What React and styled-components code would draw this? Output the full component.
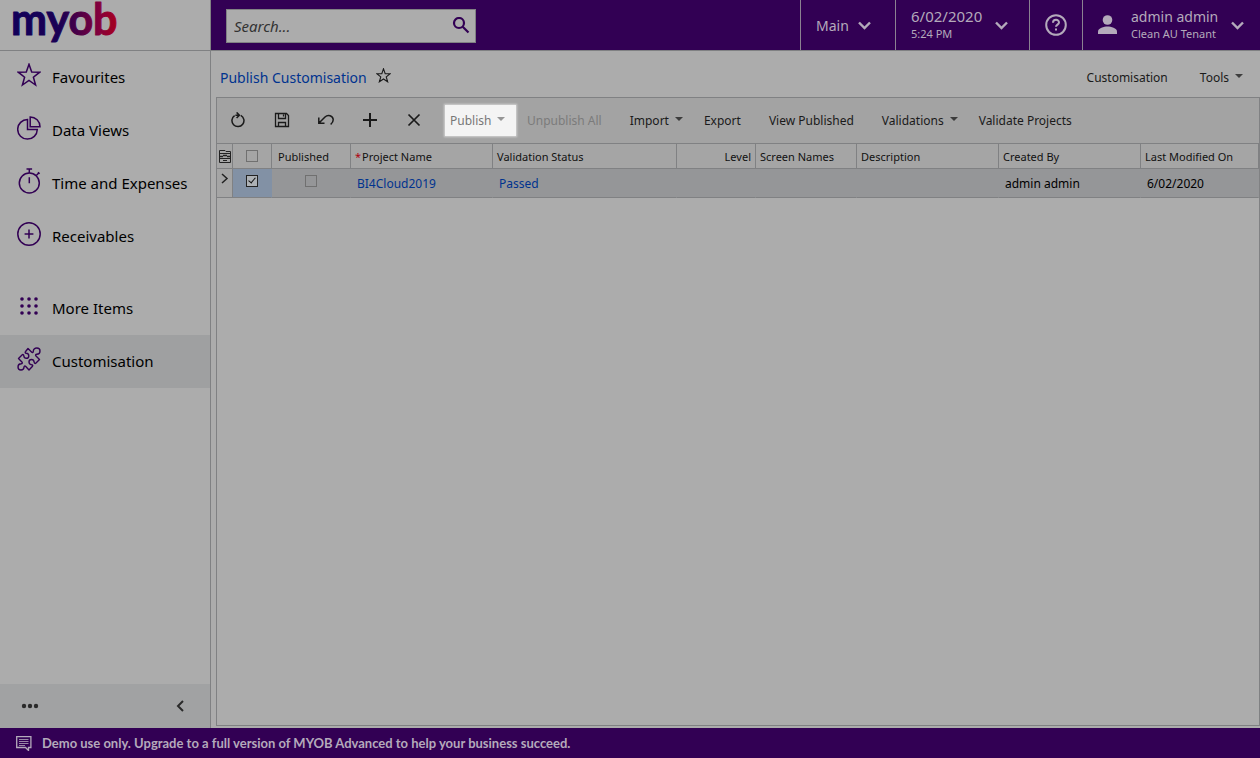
import React from "react";
import styled, { createGlobalStyle } from "styled-components";

const purple = "#320054";
const line = "#808183";
const ui = '"Noto Sans", "Open Sans", sans-serif';
const brand = 'Lato, "Noto Sans", sans-serif';

const GlobalStyle = createGlobalStyle`
  *, *::before, *::after { box-sizing: border-box; }
  body { margin: 0; background: #acacac; font-family: ${ui}; font-size: 12px; color: #1a1a1a; }
  button, input { font: inherit; color: inherit; }
  button { border: 0; padding: 0; background: none; cursor: pointer; white-space: nowrap; }
  a { text-decoration: none; }
  svg { display: block; flex: none; }
`;

const Page = styled.div`
  min-height: 100vh;
  display: flex;
  flex-direction: column;
`;

const Header = styled.header`
  display: flex;
  height: 51px;
  border-bottom: 1px solid ${line};
`;

const LogoLink = styled.a`
  flex: none;
  width: 211px;
  padding-left: 10px;
  border-right: 1px solid ${line};
`;

const HeaderBar = styled.div`
  flex: 1;
  display: flex;
  background: ${purple};
  color: #b4aabb;
`;

const SearchBox = styled.form`
  display: flex;
  align-items: center;
  width: 250px;
  height: 34px;
  margin: 9px auto 0 15px;
  padding: 0 5px 0 7px;
  background: #acacac;
  border: 1px solid ${line};
  color: ${purple};
`;

const SearchInput = styled.input`
  flex: 1;
  min-width: 0;
  border: 0;
  padding: 0;
  background: none;
  outline: 0;
  font-size: 15px;
  font-style: italic;
  color: #222;
  &::placeholder { color: #333; opacity: 1; }
`;

const HeaderButton = styled.button`
  display: flex;
  align-items: center;
  gap: ${(p) => p.$gap || 0}px;
  justify-content: ${(p) => (p.$center ? "center" : "flex-start")};
  width: ${(p) => p.$width}px;
  padding: ${(p) => (p.$center ? "0" : "0 0 0 15px")};
  border-left: 1px solid #8b8291;
  font-size: 14px;
  text-align: left;
`;

const TwoLines = styled.span`
  display: flex;
  flex-direction: column;
  font-size: ${(p) => p.$size}px;
  line-height: 17px;
  small { font-size: 11px; }
`;

const Body = styled.div`
  flex: 1;
  display: flex;
`;

const Sidebar = styled.nav`
  flex: none;
  width: 211px;
  display: flex;
  flex-direction: column;
  border-right: 1px solid ${line};
`;

const NavItem = styled.a`
  display: flex;
  align-items: center;
  gap: 11px;
  height: 53px;
  margin-top: ${(p) => (p.$apart ? 19 : 0)}px;
  padding: 0 0 1px 17px;
  background: ${(p) => (p.$active ? "#9fa0a1" : "transparent")};
  color: #000;
  font-size: 15px;
  svg { color: ${purple}; margin-bottom: 4px; }
`;

const SidebarFooter = styled.div`
  display: flex;
  align-items: center;
  justify-content: space-between;
  height: 44px;
  margin-top: auto;
  padding: 0 25px 0 21px;
  background: #a1a2a3;
`;

const Main = styled.main`
  flex: 1;
  min-width: 0;
  display: flex;
  flex-direction: column;
  padding: 0 0 2px 5px;
`;

const TitleRow = styled.div`
  display: flex;
  align-items: center;
  height: 46px;
  padding: 6px 17px 0 4px;
  gap: 32px;
`;

const Title = styled.h1`
  margin: 0;
  font-size: 14px;
  font-weight: 400;
  color: #00338f;
`;

const StarButton = styled.button`
  margin: 0 auto 4px -23px;
`;

const TextButton = styled.button`
  display: flex;
  align-items: center;
  gap: 6px;
`;

const Panel = styled.section`
  flex: 1;
  border: 1px solid ${line};
`;

const Toolbar = styled.div`
  display: flex;
  align-items: center;
  height: 45px;
  background: #a3a3a3;
`;

const IconButton = styled.button`
  display: flex;
  align-items: center;
  justify-content: center;
  width: 44px;
  height: 45px;
  padding: 0 2px 2px 0;
`;

const ToolButton = styled.button`
  display: flex;
  align-items: center;
  gap: 6px;
  height: 31px;
  padding: 0 ${(p) => (p.$menu ? 7 : 14)}px 0 14px;
  color: ${(p) => (p.disabled ? "#7b7b7b" : "#1a1a1a")};
`;

const PublishButton = styled(ToolButton)`
  width: 71px;
  margin-left: 8px;
  margin-right: -3px;
  padding: 0 5px;
  background: #f4f4f4;
  box-shadow: 0 0 2px 1px #d4d4d4;
  color: #777;
`;

const Table = styled.table`
  width: 100%;
  table-layout: fixed;
  border-collapse: separate;
  border-spacing: 0;
  border-top: 1px solid ${line};
`;

const HeadCell = styled.th`
  height: 25px;
  padding: 0 4px;
  border-right: 1px solid ${line};
  border-bottom: 1px solid ${line};
  background: #a5a5a5;
  font-size: 11px;
  font-weight: 400;
  text-align: ${(p) => p.$align || "left"};
  white-space: nowrap;
  color: #111;
  sup { color: #b00010; line-height: 0; vertical-align: baseline; margin-right: 1px; font-size: 11px; }
`;

const PaddedHeadCell = styled(HeadCell)`
  padding-left: 6px;
`;

const CheckHeadCell = styled(HeadCell)`
  padding: 0 4px 0 3px;
`;

const Cell = styled.td`
  height: 29px;
  padding: 0 6px;
  border-bottom: 1px solid ${line};
  border-right: 1px solid ${(p) => (p.$gutter ? line : "transparent")};
  background: ${(p) => (p.$gutter ? "#a5a5a5" : p.$selected ? "#8291a5" : "#959698")};
  color: #000;
  white-space: nowrap;
  a { color: #00338f; }
`;

const Check = styled.input`
  appearance: none;
  display: block;
  width: 12px;
  height: 12px;
  margin: 0 auto;
  border: 1px solid ${(p) => (p.defaultChecked ? "#222" : "#707070")};
  background: ${(p) => (p.defaultChecked ? "#adb1b5" : "transparent")};
  &:checked::after {
    content: "";
    display: block;
    width: 4px;
    height: 7px;
    margin: 0 0 0 3px;
    border: solid #111;
    border-width: 0 1px 1px 0;
    transform: rotate(40deg);
  }
`;

const Lift = styled.div`
  padding-bottom: ${(p) => p.$by}px;
`;

const Notice = styled.footer`
  display: flex;
  align-items: center;
  gap: 10px;
  height: 30px;
  padding-left: 16px;
  background: ${purple};
  color: #b4aabb;
  font-family: ${brand};
  font-size: 13px;
  font-weight: 700;
`;

const Icon = ({ size = 24, w = 1.5, children, ...rest }) => (
  <svg width={size} height={size} viewBox="0 0 24 24" fill="none" stroke="currentColor" strokeWidth={w} aria-hidden="true" {...rest}>
    {children}
  </svg>
);

const Logo = () => (
  <svg width="116" height="50" viewBox="0 0 116 50" overflow="visible" role="img" aria-label="myob">
    <defs>
      <linearGradient id="logo" gradientUnits="userSpaceOnUse" x1="3" y1="0" x2="106" y2="0">
        <stop offset="0" stopColor="#12005a" />
        <stop offset="0.46" stopColor="#1b0054" />
        <stop offset="0.62" stopColor="#480048" />
        <stop offset="0.84" stopColor="#84003c" />
        <stop offset="1" stopColor="#a50020" />
      </linearGradient>
    </defs>
    <text x="1" y="35" fontFamily={brand} fontSize="43" fontWeight="700" fill="url(#logo)" stroke="url(#logo)" strokeWidth="1" strokeLinejoin="round">myob</text>
  </svg>
);

const Chevron = () => (
  <svg width="13" height="9" viewBox="0 0 13 9" fill="none" stroke="currentColor" strokeWidth="2.4" aria-hidden="true">
    <path d="M1 1.500l5.500 5.500L12 1.500" />
  </svg>
);

const CaretIcon = styled.svg`
  margin-bottom: 3px;
`;

const Caret = () => (
  <CaretIcon width="8" height="4" viewBox="0 0 8 4" fill="currentColor" aria-hidden="true">
    <path d="M0 0h8L4 4z" opacity=".75" />
  </CaretIcon>
);

const StarPath = () => <path d="M12 1.300l2.700 7.700 8 .2-6.300 5 2.200 7.800-6.600-4.500L5.400 22l2.200-7.800-6.300-5 8-.2z" />;

const navItems = [
  { label: "Favourites", icon: <Icon><StarPath /></Icon> },
  {
    label: "Data Views",
    icon: <Icon><path d="M10.500 3.500A9.800 9.800 0 1 0 20.300 13.500h-9.800z" /><path d="M13.200.9v9.800H23A9.800 9.800 0 0 0 13.200.9z" /></Icon>,
  },
  {
    label: "Time and Expenses",
    icon: <Icon overflow="visible"><circle cx="12.300" cy="14" r="10" /><path d="M12.300 4V0M9.500 0h5.600M19.300 6.500l2.700-2.700M21 3.200l1.600 1.600M12.300 8.200v6" /></Icon>,
  },
  { label: "Receivables", icon: <Icon><circle cx="12" cy="12" r="11.200" /><path d="M12 7.600v8.800M7.600 12h8.800" /></Icon> },
  {
    label: "More Items",
    apart: true,
    icon: (
      <Icon stroke="none" fill="currentColor">
        {[5, 12, 19].map((y) => [5, 12, 19].map((x) => <circle key={`${x}-${y}`} cx={x} cy={y} r="1.800" />))}
      </Icon>
    ),
  },
  {
    label: "Customisation",
    active: true,
    icon: (
      <Icon w={1.4} strokeLinejoin="round">
        <path d="M11 1.500L14.500 5c1 1 1.800.4 1.800-.8C16.300 2 18 1 19.800 1c2 0 3.200 1.400 3.200 3 0 2-1.300 3.200-3.200 3.300-1.200.1-1.600.8-.8 1.800l3.500 3.400L19 16c-.8.8-1.700.4-1.800-.7-.2-1.800-1.200-2.800-2.700-2.800S12 13.600 12 15c0 1.500 1 2.500 2.600 2.700 1.100.1 1.500 1 .7 1.800L12 23l-3.200-3.500c-1-1-1.800-.4-1.800.8C6.900 22 5.500 23 4 23c-1.900 0-3-1.300-3-3 0-1.900 1.200-3.100 3.100-3.200 1.200-.1 1.600-.9.8-1.800l-3.400-3.500L5 8c.8-.8 1.700-.4 1.800.7.2 1.800 1.200 2.600 2.600 2.600 1.500 0 2.400-1 2.400-2.400 0-1.500-1-2.500-2.500-2.600-1.100-.1-1.500-1-.7-1.800z" />
      </Icon>
    ),
  },
];

const iconTools = [
  { label: "Refresh", icon: <Icon size={16} viewBox="0 0 16 16"><path d="M4.600 3.600a6 6 0 1 0 6.200-.3M5.400 3.200H9.200M6.600 .4l2.800 2.800L6.600 6" /></Icon> },
  { label: "Save", icon: <Icon size={16} viewBox="0 0 16 16" w={1.3}><path d="M1.500 1.500h11l2 2v11h-13zM4.500 1.500v5h7v-5M9.500 2.500v2M4.500 14.500v-4h7v4" /></Icon> },
  { label: "Undo", icon: <Icon size={16} viewBox="0 0 16 16"><path d="M.8 5.500v5.700h5.700M1 11l6-6c3-3 8-1.300 8.200 2.500.1 2.500-1 3.500-2.500 5" /></Icon> },
  { label: "Add", icon: <Icon size={16} viewBox="0 0 16 16" w={2}><path d="M8 1v14M1 8h14" /></Icon> },
  { label: "Delete", icon: <Icon size={16} viewBox="0 0 16 16" w={1.7}><path d="M2.500 2.500l11 11M13.500 2.500l-11 11" /></Icon> },
];

const textTools = [
  { label: "Unpublish All", disabled: true },
  { label: "Import", menu: true },
  { label: "Export" },
  { label: "View Published" },
  { label: "Validations", menu: true },
  { label: "Validate Projects" },
];

const columnWidths = [16, 39, 79, 142, 184, 79, 101, 142, 142];

export default function App() {
  return (
    <Page>
      <GlobalStyle />
      <Header>
        <LogoLink href="#home"><Logo /></LogoLink>
        <HeaderBar>
          <SearchBox role="search" onSubmit={(e) => e.preventDefault()}>
            <SearchInput aria-label="Search" placeholder="Search..." />
            <button type="submit" aria-label="Search">
              <Icon size={18} viewBox="0 0 18 18" w={2.2}><circle cx="7" cy="6" r="5" /><path d="M10.700 9.700l5.800 5.800" /></Icon>
            </button>
          </SearchBox>
          <HeaderButton $width={95} $gap={9}>Main<Chevron /></HeaderButton>
          <HeaderButton $width={134} $gap={13}>
            <TwoLines $size={15}>6/02/2020<small>5:24 PM</small></TwoLines>
            <Chevron />
          </HeaderButton>
          <HeaderButton $width={53} $center aria-label="Help">
            <Icon size={22} w={2} viewBox="0 0 22 22">
              <circle cx="11" cy="11" r="9.800" />
              <path d="M8 8.800c0-4 6-4 6-.3 0 2-3 2.200-3 4.300M11 14.600v2" />
            </Icon>
          </HeaderButton>
          <HeaderButton $width={178} $gap={13}>
            <svg width="20" height="20" viewBox="0 0 20 20" fill="currentColor" aria-hidden="true">
              <circle cx="9.500" cy="5" r="4.800" />
              <path d="M0 19v-2.500c0-3.500 6-5 9.500-5s9.500 1.500 9.500 5V19z" />
            </svg>
            <TwoLines $size={14}>admin admin<small>Clean AU Tenant</small></TwoLines>
            <Chevron />
          </HeaderButton>
        </HeaderBar>
      </Header>

      <Body>
        <Sidebar aria-label="Main menu">
          {navItems.map((item) => (
            <NavItem key={item.label} href="#" $apart={item.apart} $active={item.active}>
              {item.icon}
              {item.label}
            </NavItem>
          ))}
          <SidebarFooter>
            <button aria-label="More options">
              <svg width="18" height="6" viewBox="0 0 18 6" fill="#2a2a2a">
                <circle cx="3" cy="3" r="2.200" /><circle cx="9" cy="3" r="2.200" /><circle cx="15" cy="3" r="2.200" />
              </svg>
            </button>
            <button aria-label="Collapse menu">
              <svg width="9" height="12" viewBox="0 0 9 12" fill="none" stroke="#2a2a2a" strokeWidth="2"><path d="M7 1L2 6l5 5" /></svg>
            </button>
          </SidebarFooter>
        </Sidebar>

        <Main>
          <TitleRow>
            <Title>Publish Customisation</Title>
            <StarButton aria-label="Add to favourites"><Icon size={15} w={1.8}><StarPath /></Icon></StarButton>
            <TextButton>Customisation</TextButton>
            <TextButton>Tools<Caret /></TextButton>
          </TitleRow>
          <Panel>
            <Toolbar role="toolbar">
              {iconTools.map((t) => (
                <IconButton key={t.label} aria-label={t.label}>{t.icon}</IconButton>
              ))}
              <PublishButton>Publish<Caret /></PublishButton>
              {textTools.map((t) => (
                <ToolButton key={t.label} disabled={t.disabled} $menu={t.menu}>
                  {t.label}
                  {t.menu && <Caret />}
                </ToolButton>
              ))}
            </Toolbar>
            <Table>
              <colgroup>
                {columnWidths.map((w, i) => <col key={i} width={w} />)}
                <col />
              </colgroup>
              <thead>
                <tr>
                  <CheckHeadCell aria-label="Row settings">
                    <svg width="11" height="13" viewBox="0 0 11 13" fill="none" stroke="#222" overflow="visible">
                      <path d="M0 .5h5l1 1h4.500v11H-.5V.5zM0 3.500h10M0 8.500h10M3 10.500h4" />
                      <path d="M0 6.500h3M7 6.500h3.500M3 5.500h4" strokeWidth="1.400" />
                    </svg>
                  </CheckHeadCell>
                  <CheckHeadCell><Check type="checkbox" aria-label="Select all" /></CheckHeadCell>
                  <PaddedHeadCell>Published</PaddedHeadCell>
                  <HeadCell><sup>*</sup>Project Name</HeadCell>
                  <HeadCell>Validation Status</HeadCell>
                  <HeadCell $align="right">Level</HeadCell>
                  <HeadCell>Screen Names</HeadCell>
                  <HeadCell>Description</HeadCell>
                  <HeadCell>Created By</HeadCell>
                  <HeadCell>Last Modified On</HeadCell>
                </tr>
              </thead>
              <tbody>
                <tr>
                  <Cell $gutter>
                    <Lift $by={10}>
                      <svg width="8" height="11" viewBox="2 0 8 11" fill="none" stroke="#222" strokeWidth="1.500" overflow="visible"><path d="M1 1l5 4.500-5 4.500" /></svg>
                    </Lift>
                  </Cell>
                  <Cell $selected><Lift $by={4}><Check type="checkbox" defaultChecked aria-label="Select row" /></Lift></Cell>
                  <Cell><Lift $by={4}><Check type="checkbox" aria-label="Published" /></Lift></Cell>
                  <Cell><a href="#project">BI4Cloud2019</a></Cell>
                  <Cell><a href="#status">Passed</a></Cell>
                  <Cell />
                  <Cell />
                  <Cell />
                  <Cell>admin admin</Cell>
                  <Cell>6/02/2020</Cell>
                </tr>
              </tbody>
            </Table>
          </Panel>
        </Main>
      </Body>

      <Notice>
        <svg width="16" height="15" viewBox="0 0 16 15" fill="none" stroke="currentColor" aria-hidden="true">
          <path d="M.7.700h14.200v10.800h-2.400v3l-3-3H.7z" strokeWidth="1.300" />
          <path d="M3 3.500h9.500M3 5.500h9.500M3 7.500h9.500M3 9.500h6" strokeWidth=".8" />
        </svg>
        Demo use only. Upgrade to a full version of MYOB Advanced to help your business succeed.
      </Notice>
    </Page>
  );
}
